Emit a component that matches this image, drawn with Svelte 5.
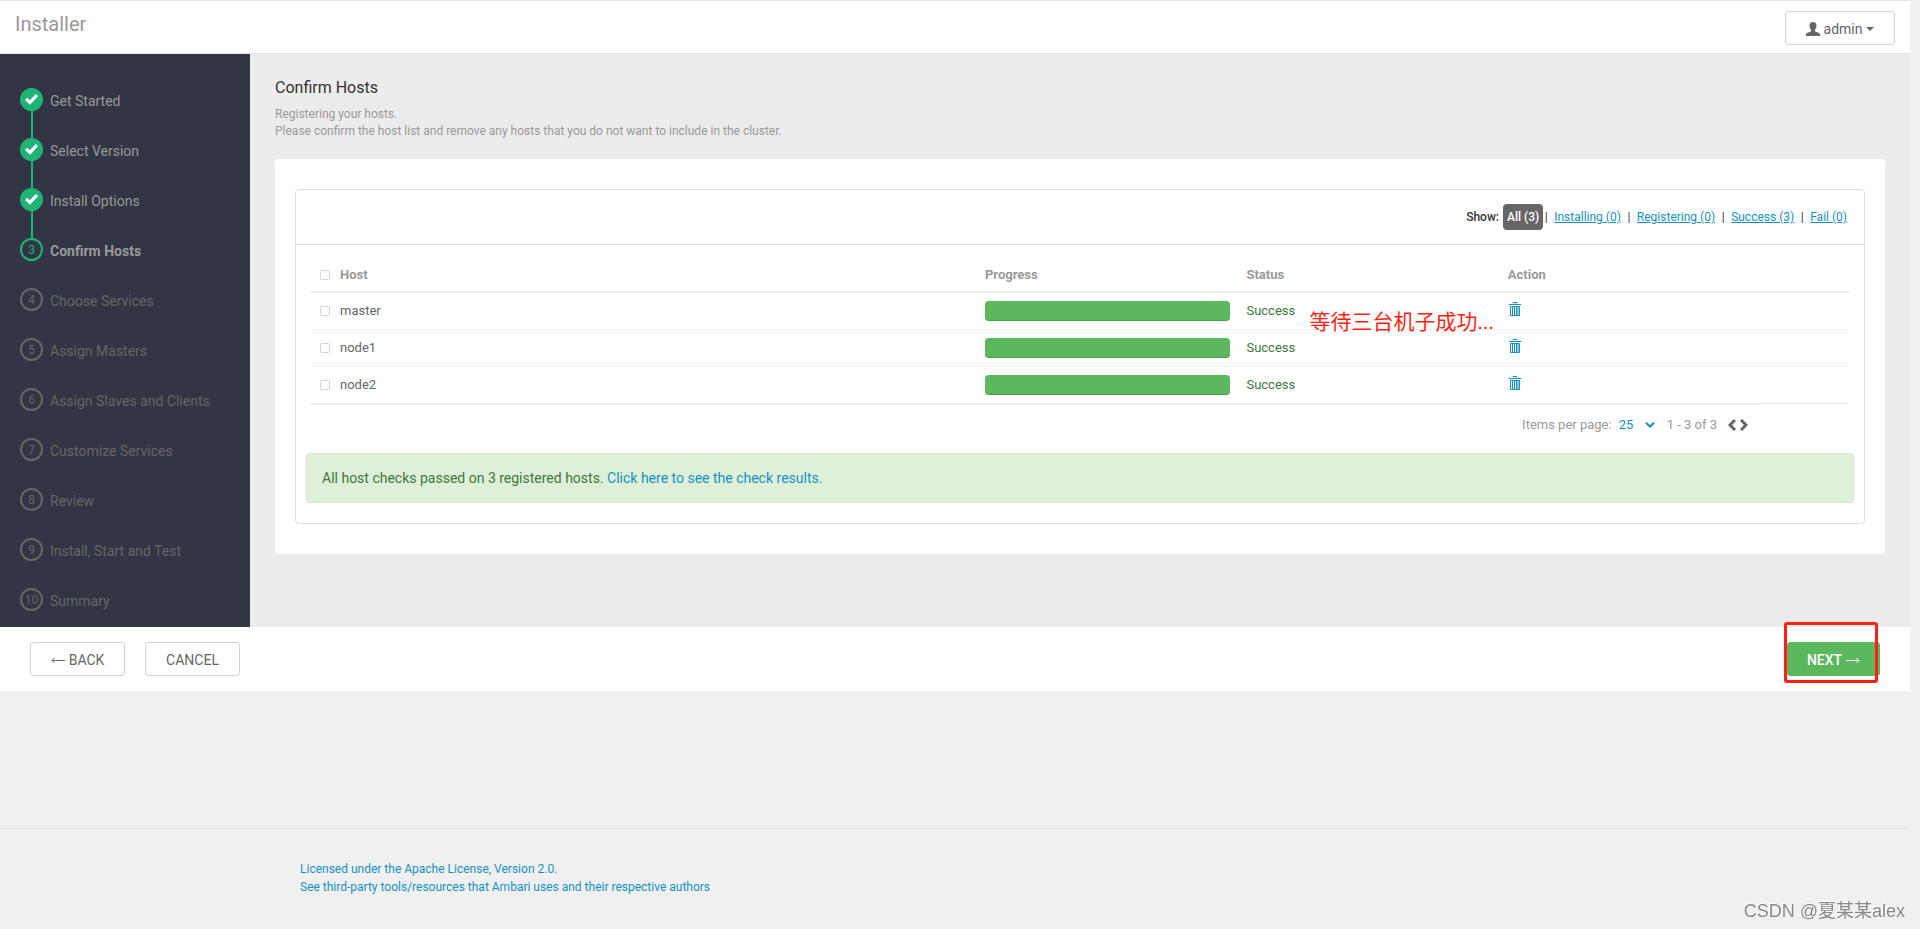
<script>
	let user = 'admin';
	let current = 3;

	let steps = [
		'Get Started',
		'Select Version',
		'Install Options',
		'Confirm Hosts',
		'Choose Services',
		'Assign Masters',
		'Assign Slaves and Clients',
		'Customize Services',
		'Review',
		'Install, Start and Test',
		'Summary'
	];

	let hosts = [
		{ name: 'master', progress: 100, status: 'Success', checked: false },
		{ name: 'node1', progress: 100, status: 'Success', checked: false },
		{ name: 'node2', progress: 100, status: 'Success', checked: false }
	];

	let filters = [
		{ label: 'Installing', count: 0 },
		{ label: 'Registering', count: 0 },
		{ label: 'Success', count: 3 },
		{ label: 'Fail', count: 0 }
	];

	let pageSize = '25';
	let allChecked = false;

	function toggleAll() {
		hosts = hosts.map((h) => ({ ...h, checked: allChecked }));
	}

	function removeHost(name) {
		hosts = hosts.filter((h) => h.name !== name);
	}
</script>

<div class="page">
	<header class="top">
		<h1>Installer</h1>
		<button class="btn user">
			<svg width="14" height="14" viewBox="0 0 14 14"><path fill="currentColor" d="M7 0C4.600 0 3.500 1.500 3.500 3.600c0 1.900.7 3.300 1.600 4.200v1.300C4.700 10.200 0 10.500 0 12.600V14h14v-1.400c0-2.100-4.700-2.400-5.100-3.500V7.800c.9-.9 1.600-2.300 1.600-4.200C10.500 1.500 9.400 0 7 0z" /></svg>
			<span>{user}</span>
			<i class="caret"></i>
		</button>
	</header>

	<div class="wizard">
		<nav class="steps">
			<ol>
				{#each steps as step, i}
					<li class:done={i < current} class:active={i === current}>
						<span class="dot">
							{#if i < current}
								<svg width="13" height="11" viewBox="0 0 13 11"><path fill="#fff" d="M10.700 0 13 2.200 5 10.800 0 6l2.200-2.200 2.700 2.500z" /></svg>
							{:else}
								{i}
							{/if}
						</span>
						<span>{step}</span>
					</li>
				{/each}
			</ol>
		</nav>

		<main>
			<h2>Confirm Hosts</h2>
			<p class="desc">Registering your hosts.<br />Please confirm the host list and remove any hosts that you do not want to include in the cluster.</p>

			<div class="card">
				<div class="panel">
					<div class="filters">
						<b>Show:</b>
						<button class="all">All (3)</button>
						{#each filters as f}
							<span class="sep">|</span>
							<a href="#{f.label}">{f.label} ({f.count})</a>
						{/each}
					</div>

					<div class="hosts">
						<table>
							<thead>
								<tr>
									<th class="host">
										<label><input type="checkbox" bind:checked={allChecked} on:change={toggleAll} />Host</label>
									</th>
									<th class="progress">Progress</th>
									<th class="status">Status</th>
									<th>Action</th>
								</tr>
							</thead>
							<tbody>
								{#each hosts as h, i}
									<tr>
										<td><label><input type="checkbox" bind:checked={h.checked} />{h.name}</label></td>
										<td><div class="track"><div class="bar" style="width: {h.progress}%"></div></div></td>
										<td class="success">
											{h.status}
											{#if i === 0}
												<span class="note">等待三台机子成功...</span>
											{/if}
										</td>
										<td>
											<button class="trash" aria-label="Remove {h.name}" on:click={() => removeHost(h.name)}>
												<svg width="12" height="14" viewBox="0 0 12 14">
													<path fill="none" stroke="currentColor" d="M4 1.500V.5h4v1M0 2.500h12M1.500 4.500v9h9v-9zM3.500 5v8M5.500 5v8M7.500 5v8M9 5v8" />
												</svg>
											</button>
										</td>
									</tr>
								{/each}
							</tbody>
						</table>
						<div class="pager">
							<label for="page-size">Items per page:</label>
							<div class="size">
								<select id="page-size" bind:value={pageSize}>
									<option>10</option>
									<option>25</option>
									<option>50</option>
								</select>
								<svg width="10" height="6" viewBox="0 0 10 6"><path fill="none" stroke="currentColor" stroke-width="2" d="M1 .7 5 4.500 9 .7" /></svg>
							</div>
							<span class="range">1 - 3 of 3</span>
							<button aria-label="Previous page"><svg width="8" height="12" viewBox="0 0 8 12"><path fill="none" stroke="currentColor" stroke-width="3" d="M7 1 2 6l5 5" /></svg></button>
							<button aria-label="Next page"><svg width="8" height="12" viewBox="0 0 8 12"><path fill="none" stroke="currentColor" stroke-width="3" d="m1 1 5 5-5 5" /></svg></button>
						</div>
					</div>

					<div class="alert">
						All host checks passed on 3 registered hosts. <a href="#results">Click here to see the check results.</a>
					</div>
				</div>
			</div>
		</main>
	</div>

	<div class="actions">
		<button class="btn">
			<svg width="14" height="7" viewBox="0 0 14 7"><path fill="none" stroke="currentColor" d="M14 3.500H1M3.500 1 1 3.500 3.500 6" /></svg>
			BACK
		</button>
		<button class="btn">CANCEL</button>
		<div class="next">
			<button class="btn green">
				NEXT
				<svg width="14" height="7" viewBox="0 0 14 7"><path fill="none" stroke="currentColor" d="M0 3.500h13M10.500 1 13 3.500 10.500 6" /></svg>
			</button>
			<span class="mark"></span>
		</div>
	</div>

	<footer>
		<a href="#license">Licensed under the Apache License, Version 2.0.</a>
		<a href="#notice">See third-party tools/resources that Ambari uses and their respective authors</a>
	</footer>
</div>

<div class="watermark">CSDN @夏某某alex</div>

<style>
	:global(body) {
		background: #f0f0f0;
	}

	.page {
		margin-right: 10px;
		font-family: Roboto, "Noto Sans CJK SC", sans-serif;
		font-size: 14px;
		line-height: 20px;
		color: #333;
	}

	h1, h2, p, ol {
		margin: 0;
		padding: 0;
		font-weight: 400;
	}

	a {
		color: #1491c1;
		text-decoration: none;
	}

	button {
		font-family: inherit;
		cursor: pointer;
	}

	/* Header */
	.top {
		display: flex;
		justify-content: space-between;
		align-items: flex-start;
		box-sizing: border-box;
		height: 54px;
		padding: 10px 15px;
		background: #fff;
		border-top: 1px solid #e3e3e3;
		border-bottom: 1px solid #e3e3e3;
	}

	h1 {
		font-size: 20px;
		line-height: 26px;
		color: #999;
	}

	.btn {
		display: flex;
		align-items: center;
		justify-content: center;
		gap: 4px;
		box-sizing: border-box;
		height: 34px;
		min-width: 95px;
		padding: 2px 12px 0;
		font-size: 14px;
		color: #666;
		background: #fff;
		border: 1px solid #cfd3d7;
		border-radius: 3px;
	}

	.user {
		min-width: 110px;
	}

	.caret {
		border: 4px solid transparent;
		border-top-color: #666;
		border-bottom: 0;
	}

	/* Steps */
	.wizard {
		display: flex;
	}

	.steps {
		box-sizing: border-box;
		flex: 0 0 250px;
		padding: 34px 20px 0;
		background: #323544;
	}

	ol {
		list-style: none;
	}

	li {
		display: flex;
		gap: 7px;
		height: 50px;
		color: #666;
	}

	li > span:last-child {
		padding-top: 3px;
	}

	li:last-child {
		height: 39px;
	}

	.dot {
		position: relative;
		display: flex;
		align-items: center;
		justify-content: center;
		box-sizing: border-box;
		width: 23px;
		height: 23px;
		font-size: 12px;
		border: 2px solid #666;
		border-radius: 50%;
	}

	.done,
	.active {
		color: #999;
	}

	.active {
		font-weight: 700;
	}

	.done .dot {
		background: #1eb475;
		border-color: #1eb475;
	}

	.active .dot {
		font-weight: 400;
		color: #1eb475;
		border-color: #1eb475;
	}

	.done .dot::after {
		content: "";
		position: absolute;
		top: 20px;
		left: 9px;
		width: 2px;
		height: 29px;
		background: #1eb475;
	}

	/* Content */
	main {
		flex: 1;
		min-width: 0;
		padding: 22px 25px 73px;
		background: #ececec;
	}

	h2 {
		font-size: 16px;
		line-height: 24px;
	}

	.desc {
		margin: 6px 0 19px;
		font-size: 12px;
		line-height: 17px;
		color: #999;
	}

	.card {
		padding: 30px 20px;
		background: #fff;
		border-radius: 4px;
	}

	.panel {
		border: 1px solid #ddd;
		border-radius: 4px;
	}

	.filters {
		display: flex;
		align-items: center;
		justify-content: flex-end;
		height: 54px;
		padding-right: 17px;
		font-size: 12px;
		border-bottom: 1px solid #ddd;
	}

	.filters a {
		text-decoration: underline;
	}

	.filters b {
		font-weight: 500;
	}

	.all {
		height: 26px;
		margin-left: 4px;
		margin-right: -5px;
		padding: 0 4px;
		font-size: 12px;
		font-weight: 500;
		color: #fff;
		background: #666;
		border: 0;
		border-radius: 4px;
	}

	.sep {
		width: 16px;
		text-align: center;
	}

	.hosts {
		padding: 12px 15px 0;
	}

	table {
		width: 100%;
		table-layout: fixed;
		border-collapse: separate;
		border-spacing: 0;
		font-size: 13px;
	}

	th,
	td {
		box-sizing: border-box;
		height: 37px;
		padding: 0 8px 1px;
		text-align: left;
		color: #666;
		border-bottom: 1px solid #eee;
	}

	th {
		height: 36px;
		padding: 2px 8px 0;
		color: #999;
		border-bottom-width: 2px;
	}

	.host {
		width: 43.3%;
	}

	.progress,
	.status {
		width: 17%;
	}

	td label,
	th label {
		display: flex;
		align-items: center;
		gap: 10px;
	}

	input {
		appearance: none;
		box-sizing: border-box;
		width: 10px;
		height: 10px;
		margin: 0 0 0 1px;
		background: #fff;
		border: 1px solid #d5d5d5;
		border-radius: 2px;
	}

	input:checked {
		background: #1491c1;
	}

	.track {
		height: 20px;
		background: #f5f5f5;
		border-radius: 4px;
	}

	.bar {
		height: 20px;
		background: #5cb85c;
		border-radius: 4px;
		box-shadow: inset 0 -1px 0 rgba(0, 0, 0, .15);
	}

	.success {
		position: relative;
		color: #3c763d;
	}

	.note {
		position: absolute;
		top: 14px;
		left: 71px;
		font-size: 21px;
		line-height: 30px;
		color: #ff1f12;
		white-space: nowrap;
	}

	.trash,
	.pager button {
		display: flex;
		padding: 0;
		color: #1491c1;
		background: none;
		border: 0;
	}

	.trash {
		margin: 0 0 4px 1px;
	}

	.pager {
		display: flex;
		align-items: center;
		justify-content: flex-end;
		height: 40px;
		margin-right: 88px;
		padding-right: 13px;
		font-size: 13px;
		color: #999;
		border-top: 1px solid #eee;
	}

	.size {
		display: flex;
		align-items: center;
		margin: 0 12px 0 7px;
		color: #1491c1;
	}

	select {
		appearance: none;
		width: 26px;
		padding: 0;
		font: inherit;
		color: inherit;
		background: none;
		border: 0;
	}

	.range {
		margin-right: 7px;
	}

	.pager button {
		margin-left: 4px;
		color: #666;
	}

	.alert {
		margin: 8px 10px 20px;
		padding: 14px 15px;
		color: #3c763d;
		background: #dff0d8;
		border: 1px solid #d6e9c6;
		border-radius: 4px;
	}

	/* Wizard buttons */
	.actions {
		display: flex;
		gap: 20px;
		padding: 15px 30px;
		background: #fff;
	}

	.next {
		position: relative;
		margin-left: auto;
	}

	.green {
		min-width: 93px;
		font-weight: 500;
		color: #fff;
		background: #5cb85c;
		border-color: #5cb85c;
	}

	.mark {
		position: absolute;
		top: -20px;
		right: 2px;
		bottom: -7px;
		left: -3px;
		border: 3px solid #ff1f12;
		border-radius: 3px;
		pointer-events: none;
	}

	footer {
		display: flex;
		flex-direction: column;
		margin-top: 137px;
		padding: 31px 300px 30px;
		font-size: 12px;
		line-height: 18px;
		border-top: 1px solid #e3e3e3;
	}

	.watermark {
		position: fixed;
		right: 15px;
		bottom: 4px;
		font-family: "Liberation Sans", "Noto Sans CJK SC", sans-serif;
		font-size: 18px;
		line-height: 28px;
		color: #888;
		text-shadow: -1px -1px 0 #fff;
	}
</style>
